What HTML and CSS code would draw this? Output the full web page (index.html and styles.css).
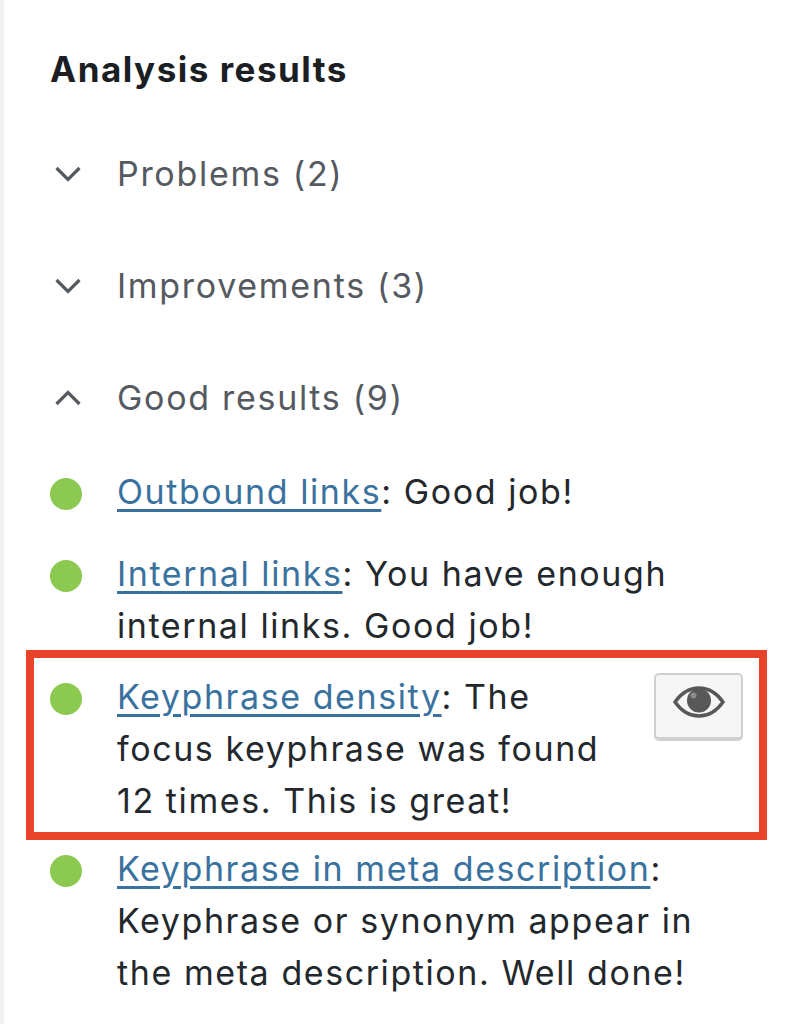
FILE: index.html
```html
<!DOCTYPE html>
<html lang="en">
<head>
<meta charset="utf-8">
<title>Analysis results</title>
<link rel="stylesheet" href="styles.css">
</head>
<body>
<main class="panel">
  <h2 class="title">Analysis results</h2>
  <div class="group">
    <svg class="chevron" viewBox="0 0 28 16"><path d="M2.5 2 14 13.5 25.5 2"/></svg>
    <span>Problems (2)</span>
  </div>
  <div class="group">
    <svg class="chevron" viewBox="0 0 28 16"><path d="M2.5 2 14 13.5 25.5 2"/></svg>
    <span>Improvements (3)</span>
  </div>
  <div class="group">
    <svg class="chevron" viewBox="0 0 28 16"><path d="M2.5 14 14 2.5 25.5 14"/></svg>
    <span>Good results (9)</span>
  </div>
  <ul class="results">
    <li class="result outbound"><i class="dot"></i><p><a href="#">Outbound links</a>: Good job!</p></li>
    <li class="result internal"><i class="dot"></i><p><a href="#">Internal links</a>: You have enough<br>internal links. Good job!</p></li>
    <li class="result highlighted"><i class="dot"></i><p><a href="#">Keyphrase density</a>: The<br>focus keyphrase was found<br>12 times. This is great!</p>
      <button class="mark" type="button" aria-label="Highlight">
        <svg class="eye" viewBox="0 0 52 32">
          <path class="eye-outline" d="M2 16C9 6 17 2 26 2s17 4 24 14c-7 10-15 14-24 14S9 26 2 16Z"/>
          <circle class="eye-pupil" cx="26" cy="14.5" r="12"/>
          <circle class="eye-glint" cx="20.5" cy="9.5" r="3"/>
        </svg>
      </button>
    </li>
    <li class="result meta"><i class="dot"></i><p><a href="#">Keyphrase in meta description</a>:<br>Keyphrase or synonym appear in<br>the meta description. Well done!</p></li>
  </ul>
</main>
</body>
</html>
```

FILE: styles.css
```css
* { box-sizing: border-box; }
html, body { margin: 0; height: 1024px; overflow: hidden; background: #fff; }
body {
  border-left: 4px solid #f1f1f2;
  font-family: Inter, "Liberation Sans", sans-serif;
  font-size: 34px;
  letter-spacing: 1.7px;
  line-height: 52px;
  color: #23282d;
}
.panel { padding: 43px 0 0 22px; }
.title {
  margin: 0 0 53px 24px;
  font-size: 35px;
  letter-spacing: 1.5px;
  font-weight: 700;
  line-height: 52px;
  color: #1b1f24;
}
.group {
  display: flex;
  align-items: center;
  height: 52px;
  margin-bottom: 60px;
  padding-left: 24px;
  color: #555a60;
}
.group:nth-of-type(3) { margin-bottom: 42px; }
.chevron { width: 28px; height: 16px; margin: 0 35px 0 4px; flex: none; }
.chevron path { fill: none; stroke: #555a60; stroke-width: 3.2; }
.results { margin: 0; padding: 0; list-style: none; letter-spacing: 1.58px; }
.result { display: flex; position: relative; padding-left: 24px; }
.result p { margin: 0; }
.outbound { margin-bottom: 30px; }
.internal { margin-bottom: -2px; }
.dot {
  flex: none;
  width: 32px;
  height: 32px;
  margin: 12px 35px 0 0;
  border-radius: 50%;
  background: #8cc951;
}
a { color: #3a729f; text-decoration: underline; text-decoration-thickness: 2.5px; text-underline-offset: 5px; }
.highlighted {
  width: 741px;
  height: 190px;
  margin-bottom: 3px;
  padding: 13px 0 0 16px;
  border: 8px solid #e8442a;
}
.mark {
  position: absolute;
  left: 620px;
  top: 15px;
  width: 89px;
  height: 68px;
  padding: 0 0 9px;
  border: 2px solid #d0d0d0;
  border-bottom-width: 4px;
  border-radius: 5px;
  background: #f6f6f6;
}
.eye { display: block; width: 52px; height: 32px; margin: 0 auto; }
.eye-outline { fill: #f6f6f6; stroke: #58585a; stroke-width: 3.4; }
.eye-pupil { fill: #58585a; }
.eye-glint { fill: #8c8c8e; }
```
